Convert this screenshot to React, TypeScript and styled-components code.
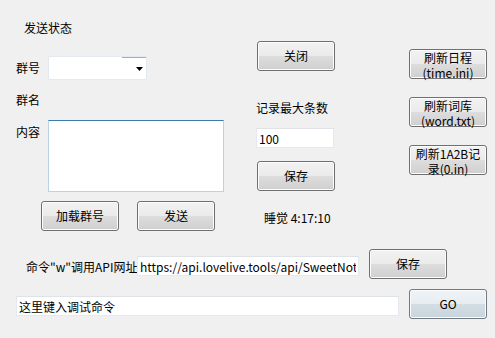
import React from 'react';
import styled, { createGlobalStyle, css } from 'styled-components';

const GlobalStyle = createGlobalStyle`
  html, body {
    margin: 0;
    padding: 0;
    background: #f0f0f0;
  }
  body {
    font-family: "Noto Sans CJK SC", "Noto Sans", sans-serif;
    font-size: 12px;
    color: #000;
  }
`;

const Window = styled.div`
  width: 495px;
  height: 338px;
  background: #f0f0f0;
  overflow: hidden;
`;

const Top = styled.div`
  display: flex;
  padding-left: 16px;
`;

const Column = styled.div<{ width: number }>`
  display: flex;
  flex-direction: column;
  align-items: flex-start;
  width: ${({ width }) => width}px;
  flex: none;
`;

const Label = styled.div<{ top?: number; left?: number; width?: number }>`
  line-height: 16px;
  white-space: nowrap;
  margin-top: ${({ top = 0 }) => top}px;
  margin-left: ${({ left = 0 }) => left}px;
  ${({ width }) => width !== undefined && css`width: ${width}px; flex: none;`}
`;

const Row = styled.div<{ top?: number; left?: number }>`
  display: flex;
  align-items: flex-start;
  margin-top: ${({ top = 0 }) => top}px;
  padding-left: ${({ left = 0 }) => left}px;
`;

const Button = styled.button<{ top?: number; left?: number; primary?: boolean; twoLine?: boolean }>`
  box-sizing: border-box;
  flex: none;
  width: 78px;
  height: 30px;
  margin: ${({ top = 0 }) => top}px 0 0 ${({ left = 0 }) => left}px;
  padding: 0;
  border: 1px solid #707070;
  border-radius: 3px;
  box-shadow: inset 0 0 0 1px #fcfcfc;
  font-family: inherit;
  font-size: 12px;
  color: #000;
  line-height: ${({ twoLine }) => (twoLine ? '15px' : '16px')};
  white-space: pre-line;
  background: ${({ primary }) =>
    primary
      ? 'linear-gradient(to bottom, #eef3f6 0%, #e6edf1 50%, #d3dde4 51%, #c9d4dc 100%)'
      : 'linear-gradient(to bottom, #f2f2f2 0%, #ebebeb 50%, #dddddd 51%, #cfcfcf 100%)'};
  ${({ primary }) => primary && css`border-color: #6f7a82;`}
`;

const inputBase = css`
  box-sizing: border-box;
  flex: none;
  height: 20px;
  padding: 0 2px;
  background: #fff;
  border: 1px solid #e3e9ef;
  border-top-color: #dfe3e8;
  font-family: inherit;
  font-size: 12px;
  color: #000;
  outline: none;
`;

const TextBox = styled.input<{ width: number; top?: number }>`
  ${inputBase}
  width: ${({ width }) => width}px;
  margin-top: ${({ top = 0 }) => top}px;
`;

const ContentArea = styled.textarea`
  ${inputBase}
  width: 176px;
  height: 72px;
  resize: none;
  border-color: #b8d2ea;
  border-top-color: #3d7bad;
`;

const Combo = styled.div`
  box-sizing: border-box;
  position: relative;
  width: 99px;
  height: 24px;
  background: #fff;
  border: 1px solid #e3e9ef;
  border-radius: 2px;
`;

const ComboArrow = styled.div`
  position: absolute;
  top: 0;
  right: 0;
  width: 24px;
  height: 22px;
  border-top: 1px solid #acacac;
  svg {
    position: absolute;
    right: 3px;
    top: 9px;
  }
`;

export default function App() {
  return (
    <>
      <GlobalStyle />
      <Window>
        <Top>
          <Column width={240}>
            <Label top={20} left={8}>发送状态</Label>
            <Row top={20}>
              <Label top={4} width={32}>群号</Label>
              <Combo>
                <ComboArrow>
                  <svg width="7" height="4" viewBox="0 0 7 4">
                    <path d="M0 0h7L3.5 4z" fill="#000" />
                  </svg>
                </ComboArrow>
              </Combo>
            </Row>
            <Label top={12}>群名</Label>
            <Row top={12}>
              <Label top={4} width={32}>内容</Label>
              <ContentArea />
            </Row>
            <Row top={9} left={25}>
              <Button>加载群号</Button>
              <Button left={18}>发送</Button>
            </Row>
          </Column>

          <Column width={153}>
            <Button top={41} left={1}>关闭</Button>
            <Label top={29}>记录最大条数</Label>
            <TextBox width={78} top={12} defaultValue="100" />
            <Button top={13} left={1}>保存</Button>
            <Label top={19} left={8}>睡觉 4:17:10</Label>
          </Column>

          <Column width={78}>
            <Button top={49} twoLine>{'刷新日程\n(time.ini)'}</Button>
            <Button top={18} twoLine>{'刷新词库\n(word.txt)'}</Button>
            <Button top={18} twoLine>{'刷新1A2B记\n录(0.in)'}</Button>
          </Column>
        </Top>

        <Row top={18} left={26}>
          <Label top={10} width={111}>命令"w"调用API网址</Label>
          <TextBox width={222} top={7} defaultValue="https://api.lovelive.tools/api/SweetNothings" />
          <Button left={10}>保存</Button>
        </Row>
        <Row top={10} left={16}>
          <TextBox width={383} top={7} defaultValue="这里键入调试命令" />
          <Button left={10} primary>GO</Button>
        </Row>
      </Window>
    </>
  );
}
